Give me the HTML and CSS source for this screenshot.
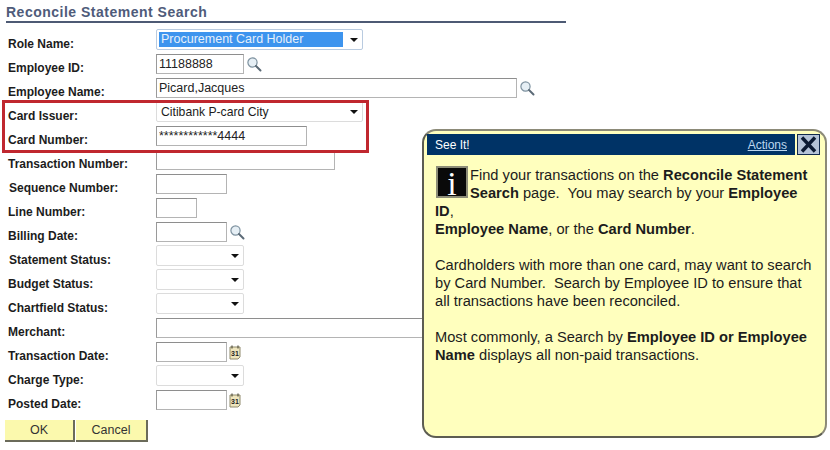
FILE: index.html
```html
<!DOCTYPE html>
<html>

<head>
  <title>Reconcile Statement Search</title>

  <link rel="stylesheet" href="styles.css">
</head>

<body>
  <svg class="icon-defs" width="0" height="0">
    <symbol id="lookup" viewBox="0 0 16 16">
      <circle cx="6.5" cy="6.5" r="4.6" fill="#e6eff5" stroke="#7d919f" stroke-width="1.2" />
      <path d="M10 10l4.5 4.5" stroke="#5b6a76" stroke-width="2" stroke-linecap="round" />
    </symbol>
    <symbol id="calendar" viewBox="0 0 12 15">
      <path d="M1 2h10v10l-2 2H1z" fill="#efe6bd" stroke="#8f8a6c" />
      <path d="M3 0.5v3M9 0.5v3" stroke="#55523f" stroke-width="1.2" />
      <text x="2" y="11.4" class="calendar-day">31</text>
    </symbol>
  </svg>

  <div class="page">
    <h1 class="page-title">Reconcile Statement Search</h1>

    <form class="search-form">
      <div class="field-row">
        <label>Role Name:</label>
        <div class="select select--role"><span class="select-value">Procurement Card Holder</span></div>
      </div>
      <div class="field-row">
        <label>Employee ID:</label>
        <input class="input w-id" type="text" value="11188888">
        <svg class="lookup"><use href="#lookup" /></svg>
      </div>
      <div class="field-row">
        <label>Employee Name:</label>
        <input class="input w-name" type="text" value="Picard,Jacques">
        <svg class="lookup"><use href="#lookup" /></svg>
      </div>
      <div class="field-row">
        <label>Card Issuer:</label>
        <div class="select select--issuer"><span class="select-text">Citibank P-card City</span></div>
      </div>
      <div class="field-row">
        <label>Card Number:</label>
        <input class="input w-card" type="text" value="************4444">
      </div>
      <div class="field-row">
        <label>Transaction Number:</label>
        <input class="input w-txn" type="text">
      </div>
      <div class="field-row">
        <label class="label-nudge">Sequence Number:</label>
        <input class="input w-date" type="text">
      </div>
      <div class="field-row">
        <label>Line Number:</label>
        <input class="input w-line" type="text">
      </div>
      <div class="field-row">
        <label>Billing Date:</label>
        <input class="input w-date" type="text">
        <svg class="lookup"><use href="#lookup" /></svg>
      </div>
      <div class="field-row">
        <label class="label-nudge">Statement Status:</label>
        <div class="select select--status"></div>
      </div>
      <div class="field-row">
        <label>Budget Status:</label>
        <div class="select select--status"></div>
      </div>
      <div class="field-row">
        <label>Chartfield Status:</label>
        <div class="select select--status"></div>
      </div>
      <div class="field-row">
        <label>Merchant:</label>
        <input class="input w-name" type="text">
      </div>
      <div class="field-row">
        <label>Transaction Date:</label>
        <input class="input w-date" type="text">
        <svg class="calendar"><use href="#calendar" /></svg>
      </div>
      <div class="field-row">
        <label>Charge Type:</label>
        <div class="select select--status"></div>
      </div>
      <div class="field-row">
        <label>Posted Date:</label>
        <input class="input w-date" type="text">
        <svg class="calendar"><use href="#calendar" /></svg>
      </div>

      <div class="form-actions">
        <button class="action-btn action-btn--ok" type="button">OK</button>
        <button class="action-btn action-btn--cancel" type="button">Cancel</button>
      </div>
    </form>
  </div>

  <!-- Red highlight over the card rows -->
  <div class="highlight"></div>

  <!-- See It! callout -->
  <div class="callout">
    <div class="callout-top">
      <div class="callout-bar">
        <span class="callout-title">See It!</span>
        <a class="callout-link" href="#">Actions</a>
      </div>
      <svg class="callout-close" viewBox="0 0 23 21">
        <rect x="0.5" y="0.5" width="22" height="20" fill="#b4c3d8" stroke="#10294d" />
        <path d="M5 3.5l13 14M18 3.5l-13 14" stroke="#0b1a33" stroke-width="3.4" />
      </svg>
    </div>

    <div class="callout-body">
      <p>
        <span class="info-icon">i</span>Find your transactions on the <b>Reconcile Statement Search</b>
        page.&nbsp; You may search by your <b>Employee ID</b>,<br>
        <b>Employee Name</b>, or the <b>Card Number</b>.
      </p>
      <p>Cardholders with more than one card, may want to search by Card Number.&nbsp; Search by Employee ID to ensure
        that all transactions have been reconciled.</p>
      <p>Most commonly, a Search by <b>Employee ID or Employee Name</b> displays all non-paid transactions.</p>
    </div>
  </div>
</body>

</html>
```

FILE: styles.css
```css
* {
  margin: 0;
  padding: 0;
  box-sizing: border-box;
}

body {
  font-family: 'Liberation Sans', Arial, sans-serif;
  background-color: #fff;
  color: #1c1c1c;
  overflow: hidden;
}

.icon-defs {
  display: block;
  height: 0;
}

.page {
  position: relative;
  width: 830px;
  height: 450px;
}

.page-title {
  width: 560px;
  height: 23px;
  margin-left: 6px;
  padding-top: 4px;
  font-size: 14px;
  line-height: 16px;
  letter-spacing: 0.5px;
  font-weight: bold;
  color: #4f5b7a;
  border-bottom: 2px solid #4d5a74;
}

.search-form {
  padding-top: 6px;
}

.field-row {
  display: flex;
  align-items: flex-start;
  height: 24px;
  padding-left: 8px;
}

.field-row label {
  flex: 0 0 148px;
  padding-top: 8px;
  font-size: 12px;
  line-height: 14px;
  font-weight: bold;
  color: #1c1c1c;
}

.field-row .label-nudge {
  padding-left: 1px;
}

.input {
  height: 20px;
  margin-top: 1px;
  padding: 0 2px;
  font-family: inherit;
  font-size: 12.5px;
  color: #222;
  background-color: #fff;
  border: 1px solid #b4b4b4;
  border-top-color: #8e8e8e;
  border-left-color: #9a9a9a;
  outline: none;
}

.w-id {
  width: 88px;
}

.w-name {
  width: 361px;
}

.w-card {
  width: 151px;
}

.w-txn {
  width: 179px;
}

.w-date {
  width: 71px;
}

.w-line {
  width: 41px;
}

.lookup {
  width: 16px;
  height: 16px;
  margin: 3px 0 0 2px;
}

.calendar {
  width: 12px;
  height: 15px;
  margin: 4px 0 0 2px;
}

.calendar-day {
  font-size: 7px;
  font-weight: bold;
  fill: #222;
}

.select {
  position: relative;
  height: 21px;
  border: 1px solid #dcdcdc;
  border-radius: 2px;
  background-color: #fff;
}

.select::after {
  content: "";
  position: absolute;
  right: 4px;
  top: 8px;
  border-left: 4px solid transparent;
  border-right: 4px solid transparent;
  border-top: 4px solid #111;
}

.select--role,
.select--issuer {
  width: 207px;
}

.select--role {
  border-color: #b9cbe0;
}

.select--status {
  width: 88px;
}

.select-value {
  display: block;
  width: 184px;
  height: 15px;
  margin: 2px 0 0 2px;
  padding-left: 2px;
  font-size: 12.5px;
  line-height: 15px;
  color: #e6f0fb;
  background-color: #3d94ee;
}

.select-text {
  display: block;
  padding: 3px 0 0 4px;
  font-size: 12.2px;
  line-height: 15px;
}

.form-actions {
  display: flex;
  gap: 1px;
  margin: 7px 0 0 5px;
}

.action-btn {
  height: 22px;
  font-family: inherit;
  font-size: 12.5px;
  color: #333;
  background-color: #fbf9ad;
  border: none;
  border-right: 2px solid #6b6b5a;
  border-bottom: 2px solid #6b6b5a;
}

.action-btn--ok {
  width: 70px;
}

.action-btn--cancel {
  width: 72px;
}

.highlight {
  position: absolute;
  left: 2px;
  top: 100px;
  width: 367px;
  height: 53px;
  border: 3px solid #c0272f;
}

.callout {
  position: absolute;
  left: 422px;
  top: 129px;
  width: 405px;
  height: 309px;
  padding: 3px;
  background-color: #ffffbe;
  border: 2px solid #5d5d52;
  border-top-color: #8c8a78;
  border-right-color: #8c8a78;
  border-radius: 14px;
}

.callout-top {
  display: flex;
  align-items: flex-start;
  gap: 2px;
}

.callout-bar {
  display: flex;
  justify-content: space-between;
  align-items: center;
  width: 368px;
  height: 21px;
  padding: 0 8px;
  background-color: #003366;
}

.callout-title {
  font-size: 12px;
  color: #fff;
}

.callout-link {
  font-size: 12px;
  color: #bcd6ee;
}

.callout-close {
  width: 23px;
  height: 21px;
}

.callout-body {
  padding: 11px 10px 0 8px;
  font-size: 14.66px;
  line-height: 18px;
  color: #1c1c1c;
}

.callout-body p {
  margin-bottom: 18px;
}

.info-icon {
  float: left;
  width: 32px;
  height: 32px;
  margin: 0 2px 0 1px;
  font-family: 'Liberation Serif', serif;
  font-size: 34px;
  line-height: 32px;
  text-align: center;
  color: #fff;
  background-color: #0a0a0a;
  border: 2px solid #8d8d78;
}
```
